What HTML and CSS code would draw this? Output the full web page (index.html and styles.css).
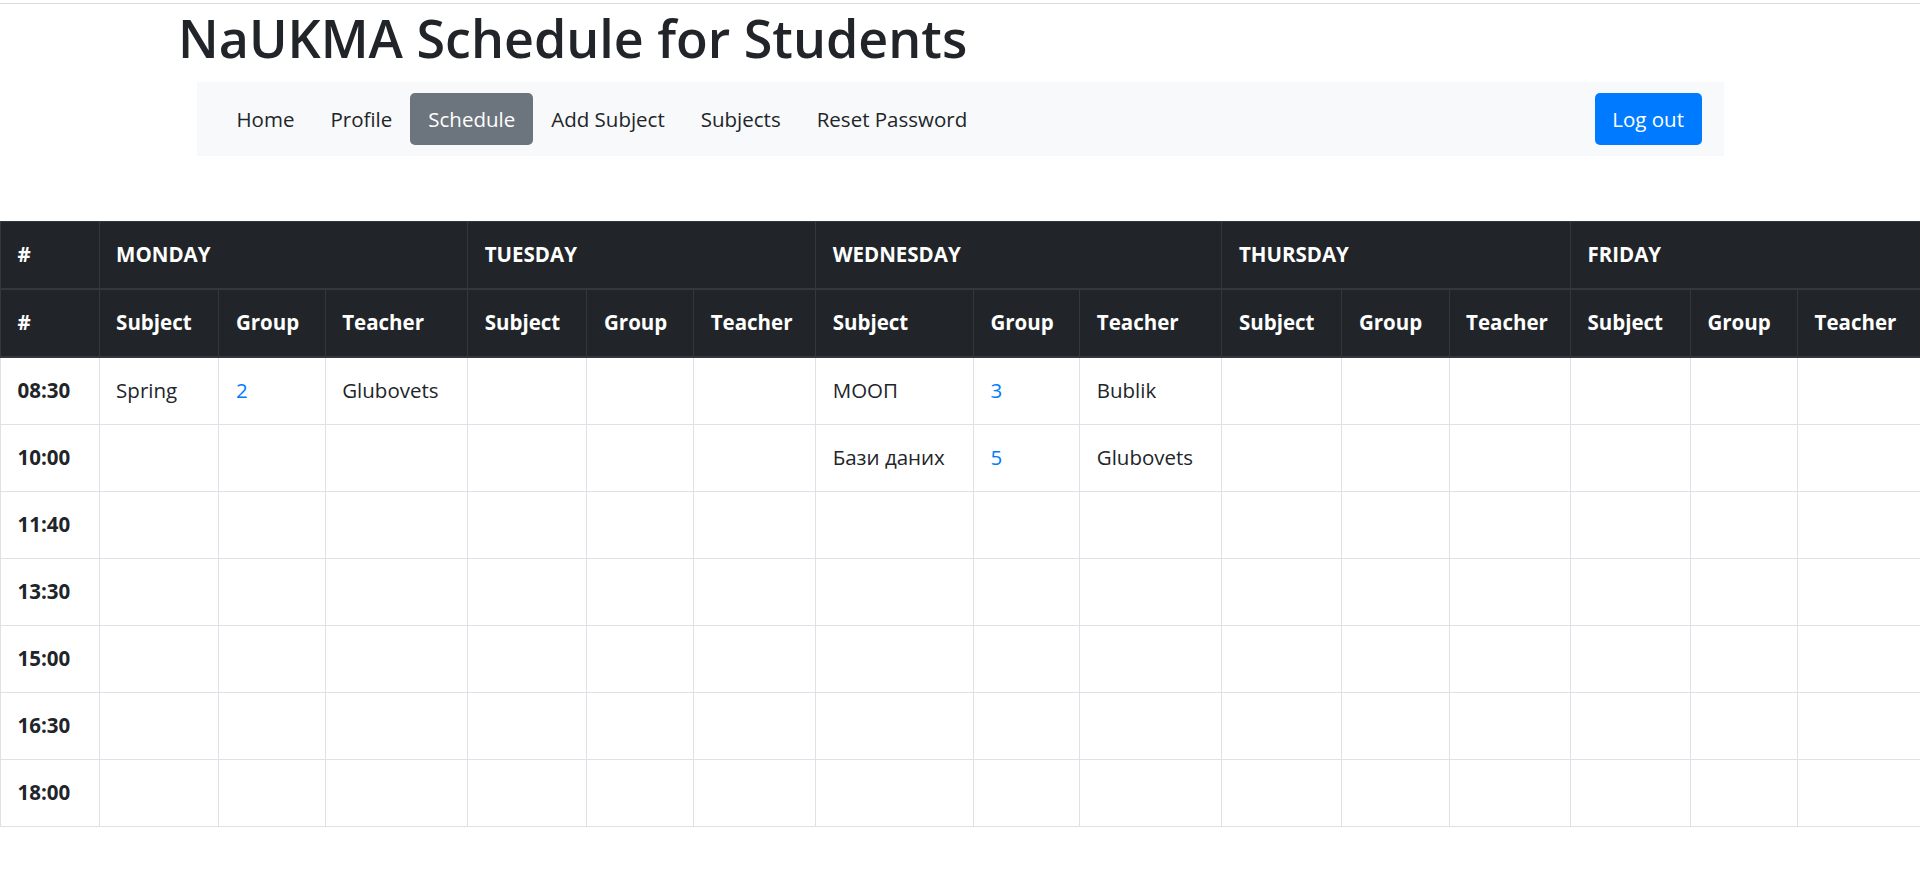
FILE: index.html
```html
<!DOCTYPE html>
<html lang="en">
<head>
<meta charset="utf-8">
<title>NaUKMA Schedule for Students</title>
<link rel="stylesheet" href="styles.css">
</head>
<body>
<div class="topline"></div>
<div class="container">
  <h1 class="title">NaUKMA Schedule for Students</h1>
  <nav class="navbar">
    <ul class="nav-links">
      <li><a class="nav-link" href="#">Home</a></li>
      <li><a class="nav-link" href="#">Profile</a></li>
      <li><a class="nav-link active" href="#">Schedule</a></li>
      <li><a class="nav-link" href="#">Add Subject</a></li>
      <li><a class="nav-link" href="#">Subjects</a></li>
      <li><a class="nav-link" href="#">Reset Password</a></li>
    </ul>
    <button class="btn-logout" type="button">Log out</button>
  </nav>
</div>
<table class="schedule">
  <colgroup>
    <col class="w-time">
    <col class="w-s1"><col class="w-g1"><col class="w-t1">
    <col class="w-s2"><col class="w-g2"><col class="w-t2">
    <col class="w-s3"><col class="w-g3"><col class="w-t3">
    <col class="w-s4"><col class="w-g4"><col class="w-t4">
    <col class="w-s5"><col class="w-g5"><col class="w-t5">
  </colgroup>
  <thead>
    <tr>
      <th>#</th>
      <th colspan="3">MONDAY</th>
      <th colspan="3">TUESDAY</th>
      <th colspan="3">WEDNESDAY</th>
      <th colspan="3">THURSDAY</th>
      <th colspan="3">FRIDAY</th>
    </tr>
    <tr>
      <th>#</th>
      <th>Subject</th><th>Group</th><th>Teacher</th>
      <th>Subject</th><th>Group</th><th>Teacher</th>
      <th>Subject</th><th>Group</th><th>Teacher</th>
      <th>Subject</th><th>Group</th><th>Teacher</th>
      <th>Subject</th><th>Group</th><th>Teacher</th>
    </tr>
  </thead>
  <tbody>
    <tr>
      <th>08:30</th>
      <td>Spring</td><td><a href="#">2</a></td><td>Glubovets</td>
      <td></td><td></td><td></td>
      <td>МООП</td><td><a href="#">3</a></td><td>Bublik</td>
      <td></td><td></td><td></td>
      <td></td><td></td><td></td>
    </tr>
    <tr>
      <th>10:00</th>
      <td></td><td></td><td></td>
      <td></td><td></td><td></td>
      <td>Бази даних</td><td><a href="#">5</a></td><td>Glubovets</td>
      <td></td><td></td><td></td>
      <td></td><td></td><td></td>
    </tr>
    <tr>
      <th>11:40</th>
      <td></td><td></td><td></td><td></td><td></td><td></td><td></td><td></td><td></td><td></td><td></td><td></td><td></td><td></td><td></td>
    </tr>
    <tr>
      <th>13:30</th>
      <td></td><td></td><td></td><td></td><td></td><td></td><td></td><td></td><td></td><td></td><td></td><td></td><td></td><td></td><td></td>
    </tr>
    <tr>
      <th>15:00</th>
      <td></td><td></td><td></td><td></td><td></td><td></td><td></td><td></td><td></td><td></td><td></td><td></td><td></td><td></td><td></td>
    </tr>
    <tr>
      <th>16:30</th>
      <td></td><td></td><td></td><td></td><td></td><td></td><td></td><td></td><td></td><td></td><td></td><td></td><td></td><td></td><td></td>
    </tr>
    <tr>
      <th>18:00</th>
      <td></td><td></td><td></td><td></td><td></td><td></td><td></td><td></td><td></td><td></td><td></td><td></td><td></td><td></td><td></td>
    </tr>
  </tbody>
</table>
</body>
</html>
```

FILE: styles.css
```css
html, body {
  margin: 0;
  padding: 0;
  background: #fff;
}

body {
  font-family: "Open Sans", "Noto Sans", Arial, sans-serif;
  font-size: 20.5px;
  line-height: 33px;
  color: #212529;
}

.topline {
  height: 0;
  margin-top: 3px;
  border-top: 1px solid #dcdcdc;
}

.container {
  width: 1568px;
  margin: 0 auto;
}

.title {
  margin: 1px 0 11px 2px;
  font-size: 52px;
  line-height: 66px;
  font-weight: 600;
  color: #212529;
}

.navbar {
  margin: 0 20.5px;
  padding: 11px 22px;
  background: #f8f9fa;
  display: flex;
  align-items: center;
  justify-content: space-between;
}

.nav-links {
  list-style: none;
  margin: 0;
  padding: 0;
  display: flex;
}

.nav-link {
  display: block;
  height: 52px;
  line-height: 52px;
  padding: 0 18px;
  border-radius: 5px;
  color: #212529;
  text-decoration: none;
}

.nav-link.active {
  background: #6c757d;
  color: #fff;
}

.btn-logout {
  height: 52px;
  padding: 0 17.5px;
  border: none;
  border-radius: 5px;
  background: #007bff;
  color: #fff;
  font-family: inherit;
  font-size: 20.5px;
  line-height: 52px;
  cursor: pointer;
}

.schedule {
  margin-top: 65px;
  width: 1920px;
  table-layout: fixed;
  border-collapse: collapse;
}

.schedule th,
.schedule td {
  padding: 16px 16.5px 17px;
  line-height: 33px;
  text-align: left;
  vertical-align: top;
  border: 1px solid #dee2e6;
  white-space: nowrap;
}

.schedule th {
  font-weight: 700;
}

.schedule thead th {
  background: #212529;
  color: #fff;
  border-color: #32383e;
  border-bottom-width: 2px;
}

.schedule td a {
  color: #007bff;
  text-decoration: none;
}

.w-time { width: 98.6px; }
.w-s1 { width: 119.8px; }
.w-g1 { width: 106.3px; }
.w-t1 { width: 142.5px; }
.w-s2 { width: 119.3px; }
.w-g2 { width: 106.7px; }
.w-t2 { width: 122px; }
.w-s3 { width: 157.7px; }
.w-g3 { width: 106.4px; }
.w-t3 { width: 142.1px; }
.w-s4 { width: 120px; }
.w-g4 { width: 107.2px; }
.w-t4 { width: 121.4px; }
.w-s5 { width: 120px; }
.w-g5 { width: 107.1px; }
.w-t5 { width: 122.9px; }
```
